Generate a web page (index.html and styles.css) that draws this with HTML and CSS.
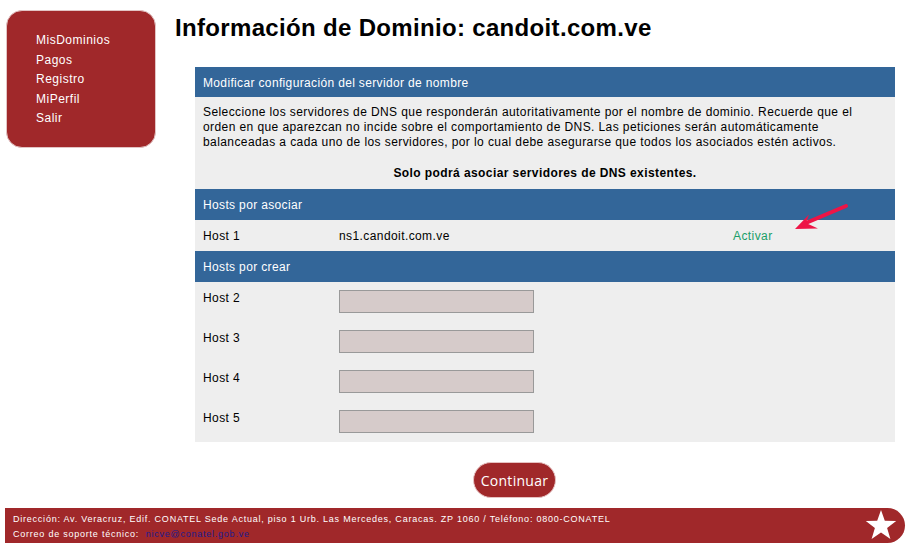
FILE: index.html
```html
<!DOCTYPE html>
<html lang="es">
<head>
<meta charset="utf-8">
<title>Información de Dominio</title>
<link rel="stylesheet" href="styles.css">
</head>
<body>
<div class="layout">
  <nav class="sidebar">
    <ul class="menu">
      <li><a href="#">MisDominios</a></li>
      <li><a href="#">Pagos</a></li>
      <li><a href="#">Registro</a></li>
      <li><a href="#">MiPerfil</a></li>
      <li><a href="#">Salir</a></li>
    </ul>
  </nav>
  <main class="main">
    <h1 class="title">Información de Dominio: candoit.com.ve</h1>
    <section class="panel">
      <div class="bar">Modificar configuración del servidor de nombre</div>
      <div class="intro">
        <p>Seleccione los servidores de DNS que responderán autoritativamente por el nombre de dominio. Recuerde que el orden en que aparezcan no incide sobre el comportamiento de DNS. Las peticiones serán automáticamente balanceadas a cada uno de los servidores, por lo cual debe asegurarse que todos los asociados estén activos.</p>
        <div class="note">Solo podrá asociar servidores de DNS existentes.</div>
      </div>
      <div class="bar tall">Hosts por asociar</div>
      <div class="host-row">
        <span>Host 1</span>
        <span>ns1.candoit.com.ve</span>
        <a class="activate" href="#">Activar</a>
      </div>
      <div class="bar tall">Hosts por crear</div>
      <div class="form">
        <div class="form-row"><label>Host 2</label><input class="field" type="text"></div>
        <div class="form-row"><label>Host 3</label><input class="field" type="text"></div>
        <div class="form-row"><label>Host 4</label><input class="field" type="text"></div>
        <div class="form-row"><label>Host 5</label><input class="field" type="text"></div>
      </div>
      <svg class="arrow" width="62" height="34" viewBox="0 0 62 34">
        <line x1="17" y1="22.5" x2="56" y2="6" stroke="#ee1446" stroke-width="4" stroke-linecap="round"/>
        <polygon points="5,29 19,14.5 16,23 28,28.5" fill="#ee1446"/>
      </svg>
    </section>
  </main>
</div>
<div class="actions">
  <button class="btn" type="button">Continuar</button>
</div>
<footer class="footer">
  <div class="footer-text">
    <div>Dirección: Av. Veracruz, Edif. CONATEL Sede Actual, piso 1 Urb. Las Mercedes, Caracas. ZP 1060 / Teléfono: 0800-CONATEL</div>
    <div>Correo de soporte técnico:&nbsp; <a class="mail" href="#">nicve@conatel.gob.ve</a></div>
  </div>
  <svg class="star" width="34" height="34" viewBox="-17 -17 34 34">
    <polygon fill="#ffffff" points="0,-16 3.8,-5.2 15.2,-4.9 6.1,1.9 9.4,12.9 0,6.4 -9.4,12.9 -6.1,1.9 -15.2,-4.9 -3.8,-5.2"/>
  </svg>
</footer>
</body>
</html>
```

FILE: styles.css
```css
* { box-sizing: border-box; }

body {
  margin: 0;
  background: #ffffff;
  font-family: "Liberation Sans", Arial, sans-serif;
  font-size: 12px;
  color: #000;
}

.layout {
  display: flex;
  align-items: flex-start;
}

.sidebar {
  margin: 10px 0 0 6px;
  width: 150px;
  height: 138px;
  background: #a0282a;
  border: 1px solid #e2c4c4;
  border-radius: 16px;
  flex-shrink: 0;
}

.menu {
  list-style: none;
  margin: 0;
  padding: 20px 0 0 29px;
}

.menu li {
  line-height: 19.5px;
}

.menu a {
  color: #ffffff;
  text-decoration: none;
  font-size: 12px;
  letter-spacing: 0.5px;
}

.main {
  margin-left: 19px;
  flex: 1;
}

.title {
  margin: 14px 0 0;
  font-size: 24px;
  line-height: 28px;
  font-weight: bold;
  letter-spacing: 0.33px;
  color: #000;
}

.panel {
  position: relative;
  margin: 25px 0 0 20px;
  width: 700px;
  letter-spacing: 0.41px;
}

.bar {
  height: 30px;
  line-height: 30px;
  padding: 1px 8px 0;
  background: #336699;
  color: #ffffff;
  font-size: 12px;
  letter-spacing: 0.35px;
  overflow: hidden;
}

.bar.tall {
  height: 31px;
  line-height: 31px;
}

.intro {
  background: #eeeeee;
  padding: 8px 8px 8px;
}

.intro p {
  margin: 0 0 16px;
  line-height: 15px;
}

.note {
  text-align: center;
  font-weight: bold;
  line-height: 15px;
}

.host-row {
  display: grid;
  grid-template-columns: 136px 394px 1fr;
  height: 31px;
  line-height: 31px;
  padding: 1px 8px 0;
  background: #eeeeee;
  overflow: hidden;
}

.activate {
  color: #1a9e68;
  text-decoration: none;
}

.form {
  background: #eeeeee;
  padding: 8px 8px 9px;
  display: flex;
  flex-direction: column;
  gap: 17px;
}

.form-row {
  display: grid;
  grid-template-columns: 136px 195px;
  align-items: start;
}

.form-row label {
  line-height: 15px;
  padding-top: 1px;
}

.field {
  display: block;
  width: 195px;
  height: 23px;
  margin: 0;
  padding: 2px 4px;
  border: 1px solid #999999;
  background: #d6cbca;
  font: 12px "Liberation Sans", Arial, sans-serif;
}

.arrow {
  position: absolute;
  left: 595px;
  top: 133px;
}

.actions {
  padding: 20px 0 0 473px;
}

.btn {
  display: block;
  width: 83px;
  height: 36px;
  padding: 0;
  border: 1px solid #e6c2c2;
  border-radius: 18px;
  background: #a0282a;
  color: #ffffff;
  font-family: "Open Sans", sans-serif;
  font-size: 14px;
  letter-spacing: 0.3px;
  cursor: pointer;
}

.footer {
  display: flex;
  align-items: center;
  margin: 10px 0 0 5px;
  width: 900px;
  height: 35px;
  background: #a0282a;
  border-radius: 0 18px 18px 0;
  color: #ffffff;
}

.footer-text {
  padding: 0 0 0 8px;
  font-size: 9px;
  line-height: 15px;
  letter-spacing: 0.77px;
  align-self: flex-start;
  padding-top: 4px;
}

.mail {
  color: #1c1c8e;
  text-decoration: none;
}

.star {
  margin-left: auto;
  margin-right: 7px;
}
```
